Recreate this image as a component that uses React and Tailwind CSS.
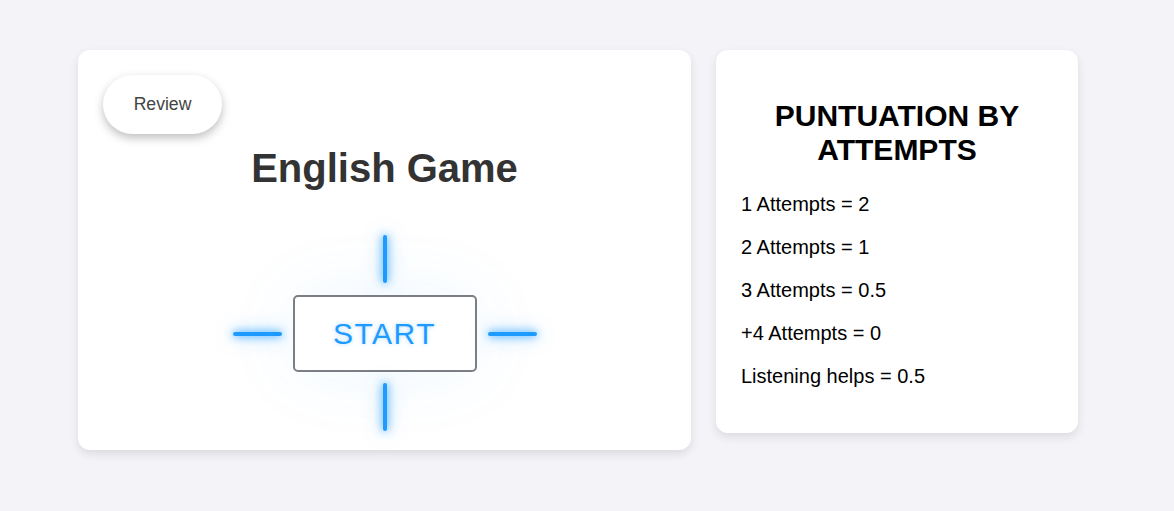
import React from 'react';

const rules = [
    '1 Attempts = 2',
    '2 Attempts = 1',
    '3 Attempts = 0.5',
    '+4 Attempts = 0',
    'Listening helps = 0.5',
];

// neon line glow
const glow = 'bg-[#1e9bff] rounded-full shadow-[0_0_8px_#1e9bff,0_0_18px_rgba(30,155,255,0.55),0_0_50px_rgba(30,155,255,0.08)]';

const App = () => {
    return (
        <div className="min-h-[511px] bg-[#f3f3f8] pt-[50px] pl-[78px] font-['Liberation_Sans',Arial,sans-serif]">
            <div className="flex items-start gap-[25px]">
                {/* game card */}
                <div className="relative w-[613px] h-[400px] bg-white rounded-xl shadow-[0_4px_10px_rgba(0,0,0,0.1)] flex flex-col items-center pt-[95px]">
                    <button className="absolute top-[25px] left-[25px] w-[119px] h-[59px] rounded-full bg-white text-[17.6px] text-[#444] shadow-[0_4px_10px_rgba(0,0,0,0.25)]">
                        Review
                    </button>

                    <h1 className="text-[40px] leading-[46px] font-bold text-[#333]">English Game</h1>

                    <div className="mt-[44px] grid grid-cols-[49px_184px_49px] gap-x-[11px] items-center justify-items-center">
                        <div className="col-start-2 row-start-1 w-[4px] h-[48px] mb-[12px]">
                            <div className={`w-full h-full ${glow}`} />
                        </div>

                        <div className={`col-start-1 row-start-2 w-[49px] h-[4px] ${glow}`} />
                        <button className="col-start-2 row-start-2 w-[184px] h-[77px] border-2 border-[#7b7f85] rounded-[5px] bg-white/60 text-[30px] tracking-[1.5px] text-[#1e9bff] shadow-[0_0_80px_rgba(30,155,255,0.07)] [text-shadow:0_0_4px_rgba(30,155,255,0.35)]">
                            START
                        </button>
                        <div className={`col-start-3 row-start-2 w-[49px] h-[4px] ${glow}`} />

                        <div className="col-start-2 row-start-3 w-[4px] h-[48px] mt-[11px]">
                            <div className={`w-full h-full ${glow}`} />
                        </div>
                    </div>
                </div>

                {/* scoring card */}
                <div className="w-[362px] bg-white rounded-xl shadow-[0_4px_10px_rgba(0,0,0,0.1)] px-[25px] pt-[49px] pb-[45px] text-black">
                    <h2 className="text-[30px] leading-[33.5px] font-bold text-center">
                        PUNTUATION BY<br />ATTEMPTS
                    </h2>
                    <div className="mt-[27px] flex flex-col gap-[20px]">
                        {rules.map((r) => (
                            <p key={r} className="text-[20px] leading-[23px]">{r}</p>
                        ))}
                    </div>
                </div>
            </div>
        </div>
    );
};

export default App;
